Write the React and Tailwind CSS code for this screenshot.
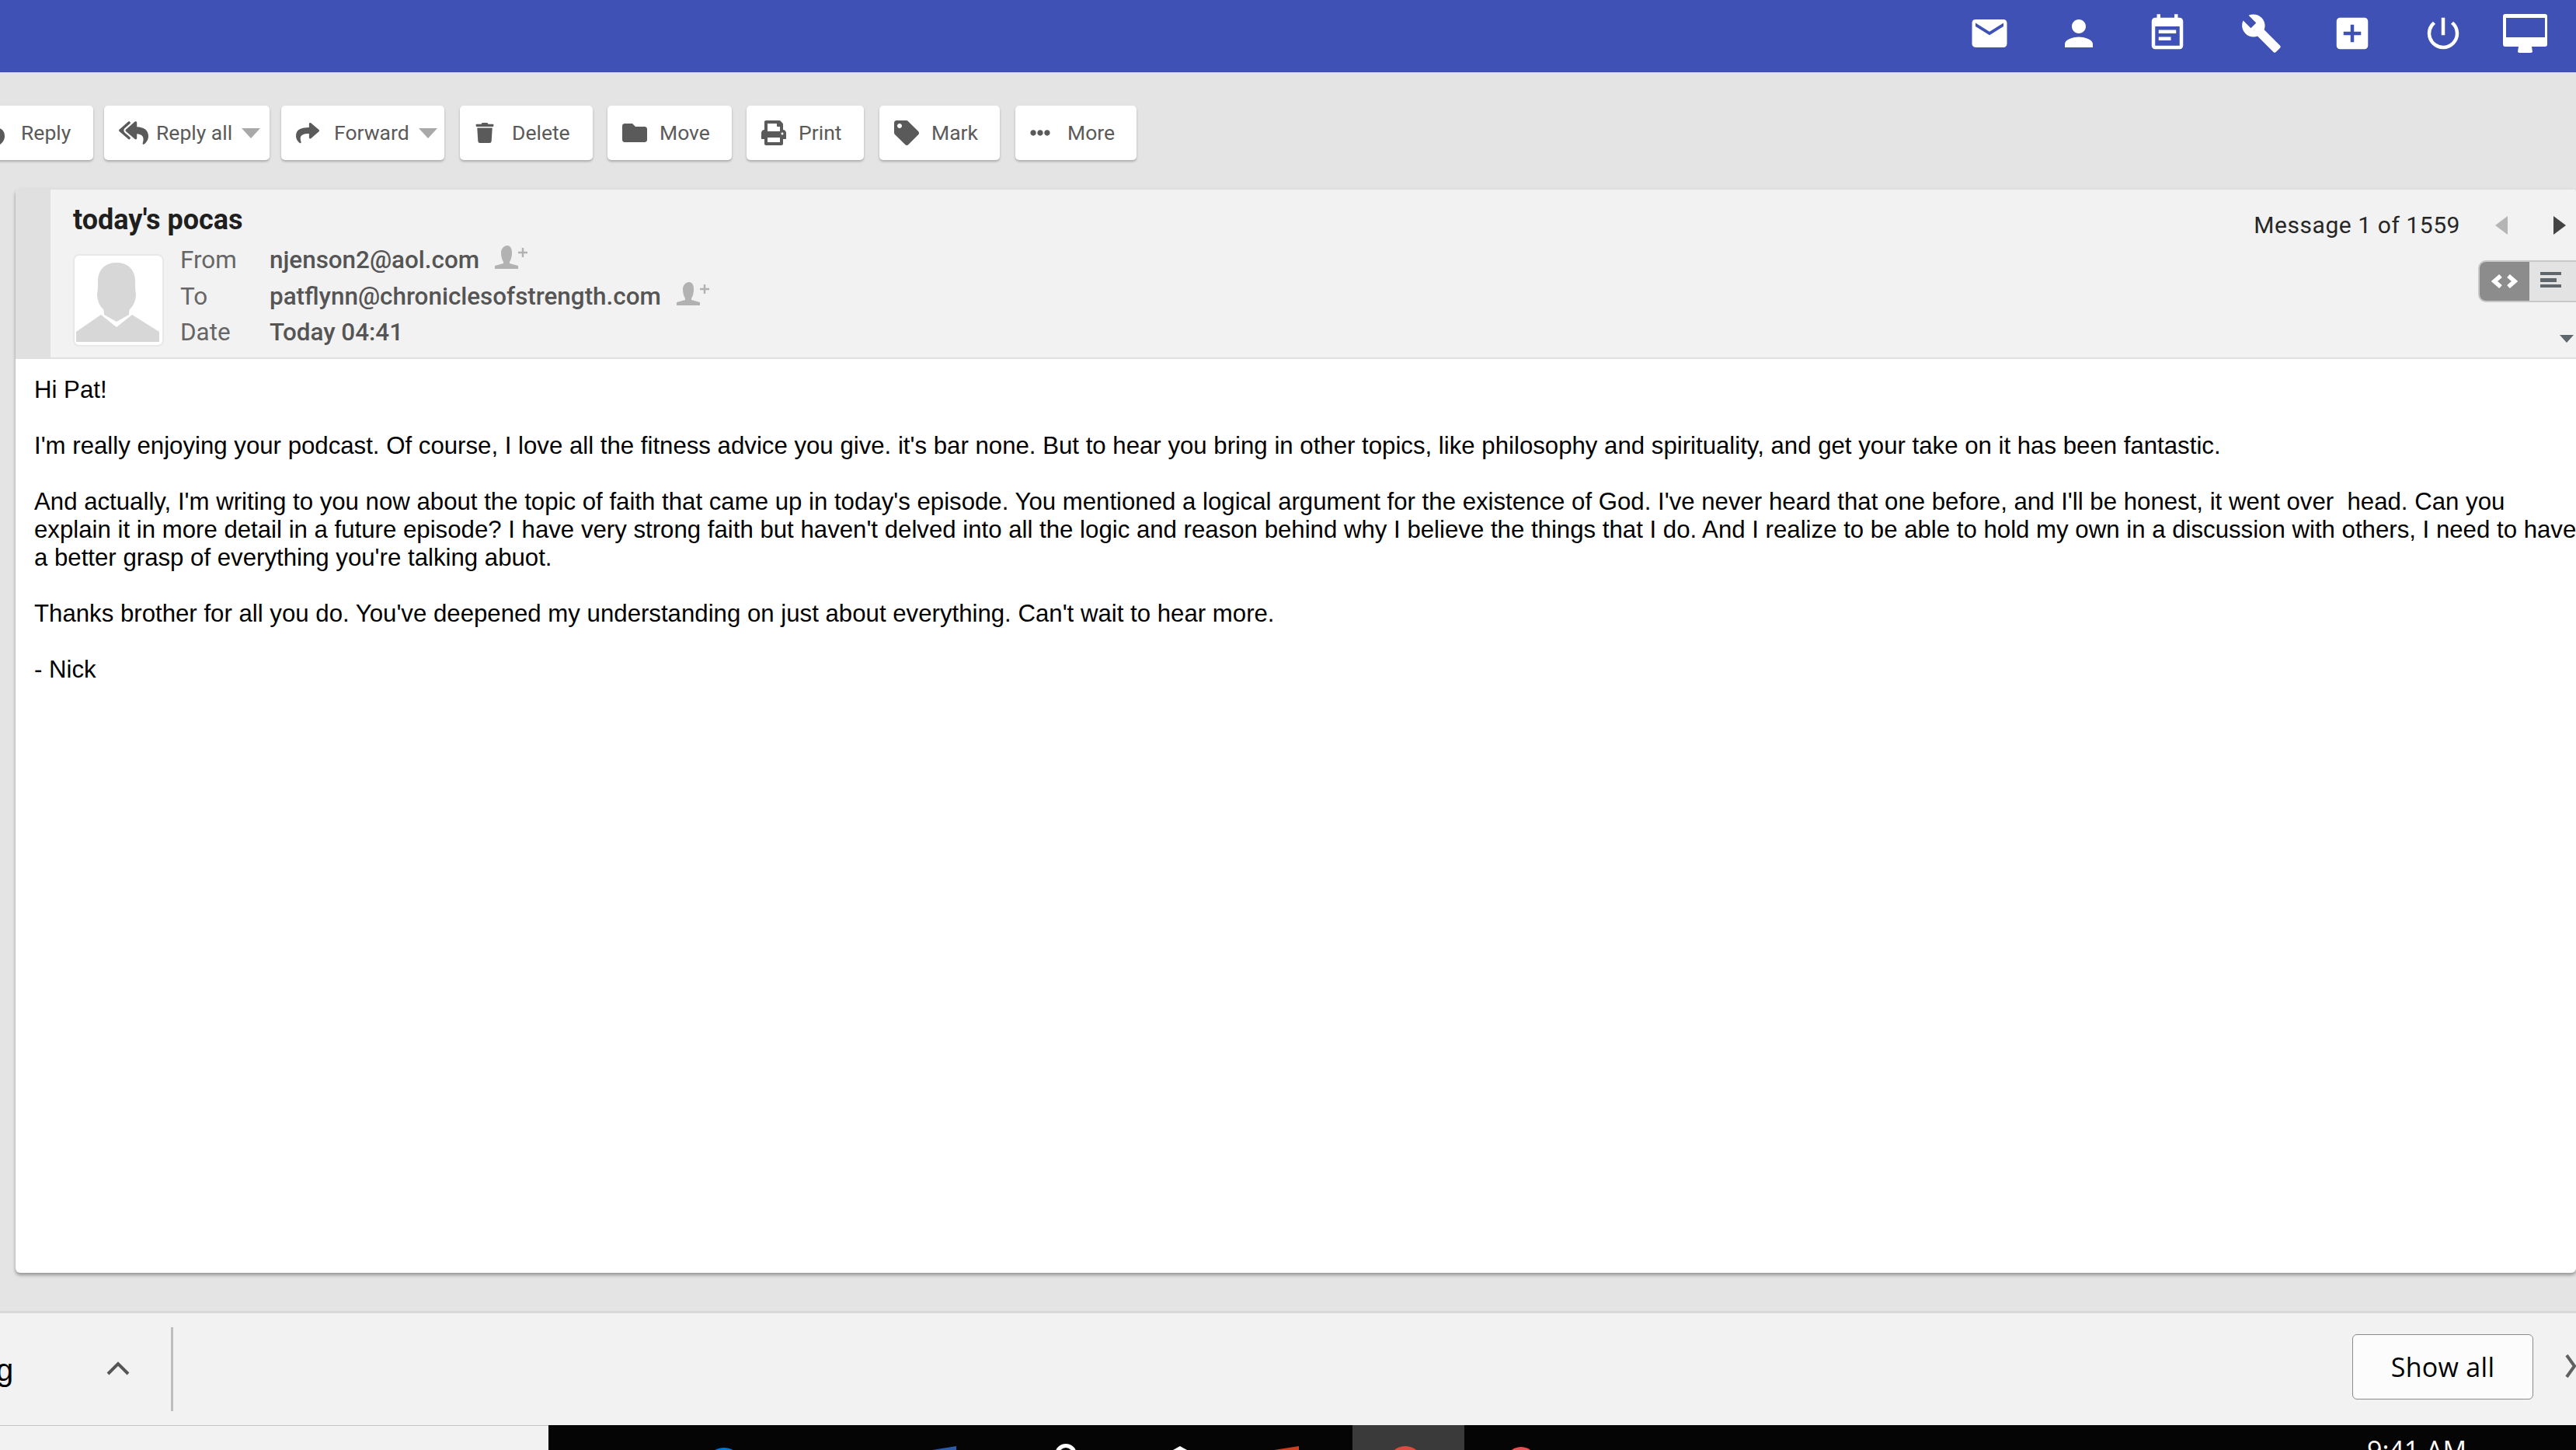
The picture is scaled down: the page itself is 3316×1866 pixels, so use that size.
import React from "react";
import { MdEmail, MdPerson, MdEventNote, MdBuild, MdAddBox, MdPowerSettingsNew } from "react-icons/md";
import { FaReply, FaReplyAll, FaShare, FaTrash, FaFolder, FaPrint, FaTag, FaEllipsisH } from "react-icons/fa";

function Caret() {
  return (
    <svg width="24" height="13" viewBox="0 0 24 13" className="ml-[12px] shrink-0">
      <path d="M0 0h24L12 13z" fill="#a9a9a9" />
    </svg>
  );
}

function Btn({ icon, label, caret, cls, gap }) {
  return (
    <div className={`flex items-center h-[70px] bg-white rounded-[5px] shadow-[0_2px_3px_rgba(0,0,0,0.25)] shrink-0 ${cls}`}>
      <span className={`flex items-center shrink-0 ${gap}`}>{icon}</span>
      <span className="text-[26.5px] leading-none text-[#5a5a5a] whitespace-nowrap">{label}</span>
      {caret ? <Caret /> : null}
    </div>
  );
}

function AddContact() {
  return (
    <svg width="42" height="30" viewBox="0 0 42 30" className="ml-[20px] -mt-[8px]">
      <path d="M16 0c4 0 6 4 6 9 0 5-1 9-3 12v2l11 3v4H0v-4l11-3v-2c-2-3-3-7-3-12 0-5 4-9 8-9z" fill="#b2b2b2" />
      <path d="M36 3v12M30 9h12" stroke="#b2b2b2" strokeWidth="2.5" />
    </svg>
  );
}

function Avatar() {
  return (
    <div className="w-[117px] h-[119px] bg-white border-2 border-[#e8e8e8] rounded-[8px] overflow-hidden shrink-0 mt-[20px]">
      <svg width="113" height="115" viewBox="0 0 113 115">
        <path d="M54 9c14 0 23 8 24 22 0 8 0 14 1 18 0 8-3 16-8 20-1 3-1 5-1 7L54 85 38 76c0-2 0-4-1-7-5-4-8-12-8-20 1-4 1-10 1-18 1-14 10-22 24-22z" fill="#d7d7d7" />
        <path d="M34 76l20 16 20-16 35 22v13H2V98z" fill="#d7d7d7" />
      </svg>
    </div>
  );
}

function Row({ label, value, add, h }) {
  return (
    <div className={`flex items-center text-[31.4px] leading-none ${h}`}>
      <span className="w-[115px] text-[#666666] shrink-0">{label}</span>
      <span className="font-medium text-[#555555] whitespace-nowrap">{value}</span>
      {add ? <AddContact /> : null}
    </div>
  );
}

const lines = [
  "Hi Pat!",
  "",
  "I'm really enjoying your podcast. Of course, I love all the fitness advice you give. it's bar none. But to hear you bring in other topics, like philosophy and spirituality, and get your take on it has been fantastic.",
  "",
  "And actually, I'm writing to you now about the topic of faith that came up in today's episode. You mentioned a logical argument for the existence of God. I've never heard that one before, and I'll be honest, it went over  head. Can you",
  "explain it in more detail in a future episode? I have very strong faith but haven't delved into all the logic and reason behind why I believe the things that I do. And I realize to be able to hold my own in a discussion with others, I need to have",
  "a better grasp of everything you're talking abuot.",
  "",
  "Thanks brother for all you do. You've deepened my understanding on just about everything. Can't wait to hear more.",
  "",
  "- Nick",
];

export default function App() {
  return (
    <div className="w-[3316px] h-[1866px] overflow-hidden flex flex-col bg-[#e4e4e4] font-['Roboto',sans-serif]">
      <header className="h-[93px] shrink-0 bg-[#3f51b5] flex items-center text-white pb-[7px]">
        <div className="ml-auto flex items-center mr-[37px]">
          <MdEmail size={54} className="mr-[61px]" />
          <MdPerson size={54} className="mr-[60px]" />
          <MdEventNote size={54} className="mr-[67px]" />
          <MdBuild size={54} className="mr-[63px]" />
          <MdAddBox size={54} className="mr-[63px]" />
          <MdPowerSettingsNew size={54} className="mr-[50px]" />
          <svg width="57" height="50" viewBox="0 0 57 50" fill="#ffffff">
            <path fillRule="evenodd" d="M3 0h51a3 3 0 0 1 3 3v36a3 3 0 0 1-3 3H3a3 3 0 0 1-3-3V3a3 3 0 0 1 3-3zM4 5v25h50V5z" />
            <path d="M20 42h17l1 7-2 1H21l-2-1z" />
          </svg>
        </div>
      </header>

      <div className="h-[149px] shrink-0 flex items-start pt-[43px] gap-[14px] ml-[-40px]">
        <Btn cls="w-[160px] pl-[12px]" gap="w-[55px]" icon={<FaReply size={34} color="#5a5a5a" />} label="Reply" />
        <Btn cls="w-[213px] pl-[19px]" gap="w-[48px]" icon={<FaReplyAll size={38} color="#5a5a5a" />} label="Reply all" caret />
        <Btn cls="w-[210px] pl-[19px] ml-[1px]" gap="w-[49px]" icon={<FaShare size={30} color="#5a5a5a" />} label="Forward" caret />
        <Btn cls="w-[171px] pl-[19px] ml-[6px]" gap="w-[48px]" icon={<FaTrash size={26} color="#5a5a5a" />} label="Delete" />
        <Btn cls="w-[160px] pl-[19px] ml-[5px]" gap="w-[48px]" icon={<FaFolder size={32} color="#5a5a5a" />} label="Move" />
        <Btn cls="w-[151px] pl-[19px] ml-[5px]" gap="w-[48px]" icon={<FaPrint size={32} color="#5a5a5a" />} label="Print" />
        <Btn cls="w-[155px] pl-[19px] ml-[6px]" gap="w-[48px]" icon={<FaTag size={32} color="#5a5a5a" />} label="Mark" />
        <Btn cls="w-[156px] pl-[19px] ml-[6px]" gap="w-[48px]" icon={<FaEllipsisH size={26} color="#5a5a5a" />} label="More" />
      </div>

      <div className="ml-[20px] h-[1396px] shrink-0 bg-white rounded-[6px] shadow-[0_3px_4px_rgba(0,0,0,0.35)] flex flex-col overflow-hidden">
        <div className="h-[220px] shrink-0 flex bg-[#f2f2f2] border-t-2 border-b-2 border-[#e0e0e0]">
          <div className="w-[45px] shrink-0 bg-[#e0e0e0]" />
          <div className="flex-1 pl-[29px] relative">
            <div className="text-[36px] leading-none font-bold text-[#1f1f1f] pt-[21px] h-[63px]">today's pocas</div>
            <div className="flex">
              <Avatar />
              <div className="ml-[21px] mt-[4px] flex flex-col">
                <Row h="h-[48px]" label="From" value="njenson2@aol.com" add />
                <Row h="h-[46px]" label="To" value="patflynn@chroniclesofstrength.com" add />
                <Row h="h-[46px]" label="Date" value="Today 04:41" />
              </div>
            </div>
            <div className="absolute top-[31px] right-[13px] flex items-center">
              <span className="text-[30px] leading-none text-[#262626] tracking-[0.55px]">Message 1 of 1559</span>
              <svg width="16" height="24" viewBox="0 0 16 24" className="ml-[45px]"><path d="M16 0v24L0 12z" fill="#b5b5b5" /></svg>
              <svg width="16" height="24" viewBox="0 0 16 24" className="ml-[59px]"><path d="M0 0v24l16-12z" fill="#444444" /></svg>
            </div>
            <div className="absolute top-[91px] right-[-10px] w-[136px] h-[54px] flex border-2 border-[#c8c8c8] rounded-[10px] overflow-hidden bg-[#e3e3e3]">
              <div className="w-[64px] bg-[#8c8c8c] flex items-center justify-center">
                <svg width="34" height="18" viewBox="0 0 34 18" fill="none" stroke="#ffffff" strokeWidth="5.5"><path d="M12 2L4 9l8 7M22 2l8 7-8 7" /></svg>
              </div>
              <div className="flex-1 pl-[14px] pt-[13px]">
                <svg width="27" height="22" viewBox="0 0 27 22" fill="#5f676d"><rect width="27" height="4" /><rect y="8" width="21" height="5" /><rect y="16" width="27" height="4" /></svg>
              </div>
            </div>
            <svg width="18" height="10" viewBox="0 0 18 10" className="absolute top-[187px] right-[3px]"><path d="M0 0h18L9 10z" fill="#5f676d" /></svg>
          </div>
        </div>
        <div className="pt-[22px] pl-[24px] font-['Liberation_Sans',sans-serif] text-[31.2px] leading-[36px] text-black whitespace-pre">
          {lines.map((l, i) => (
            <div key={i} className="h-[36px]">{l}</div>
          ))}
        </div>
      </div>

      <div className="h-[49px] shrink-0" />
      <div className="h-[147px] shrink-0 bg-[#f2f2f2] border-t-[3px] border-[#d8d8d8] flex items-center relative">
        <span className="font-['Liberation_Sans',sans-serif] text-[40px] leading-none text-black ml-[-5px] mt-[2px]">g</span>
        <svg width="30" height="18" viewBox="0 0 30 18" fill="none" stroke="#555555" strokeWidth="4" className="ml-[120px] -mt-[3px]"><path d="M2 16L15 3l13 13" /></svg>
        <div className="w-[3px] h-[108px] bg-[#bdbdbd] ml-[53px]" />
        <div className="ml-auto w-[233px] h-[84px] mr-[55px] -mt-[6px] bg-[#fcfcfc] border border-[#8a8a8a] rounded-[6px] flex items-center justify-center font-['Open_Sans',sans-serif] text-[34px] tracking-[0.3px] text-black">Show all</div>
        <svg width="14" height="30" viewBox="0 0 14 30" fill="none" stroke="#606060" strokeWidth="4" className="absolute right-[0px] top-[53px]"><path d="M2 1l10 14L2 29" /></svg>
      </div>
      <div className="h-[32px] shrink-0 flex bg-[#f2f2f2] overflow-hidden">
        <div className="w-[706px] shrink-0 border-t border-[#c4c4c4]" />
        <div className="flex-1 bg-[#050505] relative overflow-hidden">
          <div className="absolute left-[1035px] top-0 w-[144px] h-[32px] bg-[#3a3a3a]" />
          <div className="absolute left-[201px] top-[29px] w-[50px] h-[50px] rounded-full bg-[#0078d7]" />
          <svg width="32" height="6" viewBox="0 0 32 6" className="absolute left-[494px] top-[27px]"><path d="M0 5L31 0v6H0z" fill="#2a5caa" /></svg>
          <div className="absolute left-[652px] top-[24px] w-[28px] h-[28px] rounded-full border-[5px] border-white" />
          <svg width="18" height="5" viewBox="0 0 18 5" className="absolute left-[804px] top-[27px]"><path d="M9 0l9 5H0z" fill="#ffffff" /></svg>
          <svg width="32" height="6" viewBox="0 0 32 6" className="absolute left-[934px] top-[27px]"><path d="M0 5L32 0v6H0z" fill="#cf3f1f" /></svg>
          <div className="absolute left-[1080px] top-[27px] w-[46px] h-[46px] rounded-full bg-[#dd4b3e]" />
          <div className="absolute left-[1232px] top-[28px] w-[40px] h-[40px] rounded-full bg-[#ea4f56]" />
          <span className="absolute left-[2341px] top-[15px] font-['Open_Sans',sans-serif] text-[34px] leading-none text-white whitespace-nowrap">9:41 AM</span>
        </div>
      </div>
    </div>
  );
}
